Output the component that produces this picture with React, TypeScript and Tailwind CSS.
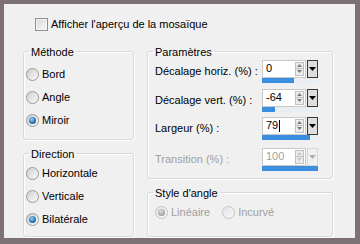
const FONT = { fontFamily: '"Liberation Sans", Arial, sans-serif' };

function Radio({ checked, disabled }: { checked?: boolean; disabled?: boolean }) {
  return (
    <span
      className={`flex h-[13px] w-[13px] shrink-0 items-center justify-center rounded-full border ${
        disabled ? 'border-[#c4c4c4] bg-gradient-to-br from-[#e4e4e4] to-[#f8f8f8]' : 'border-[#9a9a9a] bg-gradient-to-br from-[#cfcfcf] to-[#fbfbfb]'
      }`}
    >
      {checked && (
        <span
          className={`h-[7px] w-[7px] rounded-full ${
            disabled
              ? 'bg-[radial-gradient(circle_at_40%_35%,#e0e0e0,#a8a8a8_60%,#8c8c8c)]'
              : 'bg-[radial-gradient(circle_at_40%_35%,#9bd6f7,#2f7fb8_50%,#0d3d63)]'
          }`}
        />
      )}
    </span>
  );
}

function RadioRow({ label, checked, disabled }: { label: string; checked?: boolean; disabled?: boolean }) {
  return (
    <div className="flex h-[23px] items-center gap-[3px]">
      <Radio checked={checked} disabled={disabled} />
      <span className={disabled ? 'text-[#a0a0a0]' : 'text-black'}>{label}</span>
    </div>
  );
}

function Group({ title, className, children }: { title: string; className: string; children: React.ReactNode }) {
  return (
    <fieldset
      className={`rounded-[3px] border border-[#d9d9d9] shadow-[1px_1px_0_#ffffff,inset_1px_1px_0_#ffffff] ${className}`}
    >
      <legend className="ml-[5px] px-[2px] leading-[14px] text-black">{title}</legend>
      {children}
    </fieldset>
  );
}

function Arrow({ up, color }: { up?: boolean; color: string }) {
  return (
    <svg width="5" height="3" viewBox="0 0 5 3">
      <path d={up ? 'M0 3 L2.5 0 L5 3 Z' : 'M0 0 L5 0 L2.5 3 Z'} fill={color} />
    </svg>
  );
}

interface SpinProps {
  readonly value: string;
  readonly bar: number;
  readonly caret?: boolean;
  readonly disabled?: boolean;
}

function Spin({ value, bar, caret, disabled }: SpinProps) {
  return (
    <div className="flex w-[56px] flex-col">
      <div className="flex h-[18px]">
        <div
          className={`flex flex-1 items-center border border-r-0 border-[#c9c9c9] bg-white pl-[3px] ${
            disabled ? 'text-[#a0a0a0]' : 'text-black'
          }`}
        >
          {value}
          {caret && <span className="ml-[1px] h-[12px] w-[1px] bg-black" />}
        </div>
        <div className="flex w-[11px] flex-col border border-l-0 border-[#c9c9c9] bg-white py-[1px] pr-[1px]">
          <div className="flex flex-1 items-center justify-center border border-[#c0c0c0] bg-[#ececec]">
            <Arrow up color={disabled ? '#c8c8c8' : '#7a7a7a'} />
          </div>
          <div className="flex flex-1 items-center justify-center border border-t-0 border-[#c0c0c0] bg-[#ececec]">
            <Arrow color={disabled ? '#c8c8c8' : '#7a7a7a'} />
          </div>
        </div>
        <div
          className={`ml-[1px] flex w-[11px] items-center justify-center border ${
            disabled ? 'border-[#d8d8d8] bg-[#f0f0f0]' : 'border-[#3a3a3a] bg-[#dedede]'
          }`}
        >
          <svg width="7" height="4" viewBox="0 0 7 4">
            <path d="M0 0 L7 0 L3.5 4 Z" fill={disabled ? '#b0b0b0' : '#000000'} />
          </svg>
        </div>
      </div>
      <div className="h-[5px] bg-[#e9eef3]">
        <div className="h-full bg-[#3b8ddf]" style={{ width: bar }} />
      </div>
    </div>
  );
}

function ParamRow({ label, className, disabled, children }: { label: string; className: string; disabled?: boolean; children: React.ReactNode }) {
  return (
    <div className={`flex items-center ${className}`}>
      <span className={`w-[107px] ${disabled ? 'text-[#a0a0a0]' : 'text-black'}`}>{label}</span>
      {children}
    </div>
  );
}

export default function App() {
  return (
    <div
      className="h-[244px] w-[360px] border-b-[6px] border-l-4 border-r-[5px] border-t-4 border-[#7d7175] bg-[#f0f0f0] text-[11px]"
      style={FONT}
    >
      <div className="flex items-center gap-[3px] pl-[31px] pt-[12px]">
        <span className="h-[13px] w-[13px] border border-[#8f8f8f] bg-gradient-to-br from-[#d6d6d6] to-[#fbfbfb] shadow-[inset_0_0_0_1px_#f4f4f4]" />
        <span className="text-black">Afficher l'aperçu de la mosaïque</span>
      </div>

      <div className="mt-[12px] flex gap-[13px] pl-[19px]">
        <div className="flex w-[111px] flex-col gap-[7px]">
          <Group title="Méthode" className="h-[95px]">
            <div className="pl-[2px] pt-[4px]">
              <RadioRow label="Bord" />
              <RadioRow label="Angle" />
              <RadioRow label="Miroir" checked />
            </div>
          </Group>
          <Group title="Direction" className="h-[90px]">
            <div className="pl-[2px] pt-[1px]">
              <RadioRow label="Horizontale" />
              <RadioRow label="Verticale" />
              <RadioRow label="Bilatérale" checked />
            </div>
          </Group>
        </div>

        <div className="flex w-[186px] flex-col gap-[7px]">
          <Group title="Paramètres" className="h-[134px]">
            <div className="pl-[7px] pt-[1px]">
              <ParamRow label="Décalage horiz. (%) :" className="">
                <Spin value="0" bar={32} />
              </ParamRow>
              <ParamRow label="Décalage vert. (%) :" className="mt-[6px]">
                <Spin value="-64" bar={13} />
              </ParamRow>
              <ParamRow label="Largeur (%) :" className="mt-[5px]">
                <Spin value="79" bar={48} caret />
              </ParamRow>
              <ParamRow label="Transition (%) :" className="mt-[8px]" disabled>
                <Spin value="100" bar={56} disabled />
              </ParamRow>
            </div>
          </Group>
          <Group title="Style d'angle" className="h-[51px]">
            <div className="flex gap-[12px] pl-[7px] pt-[1px]">
              <RadioRow label="Linéaire" checked disabled />
              <RadioRow label="Incurvé" disabled />
            </div>
          </Group>
        </div>
      </div>
    </div>
  );
}
